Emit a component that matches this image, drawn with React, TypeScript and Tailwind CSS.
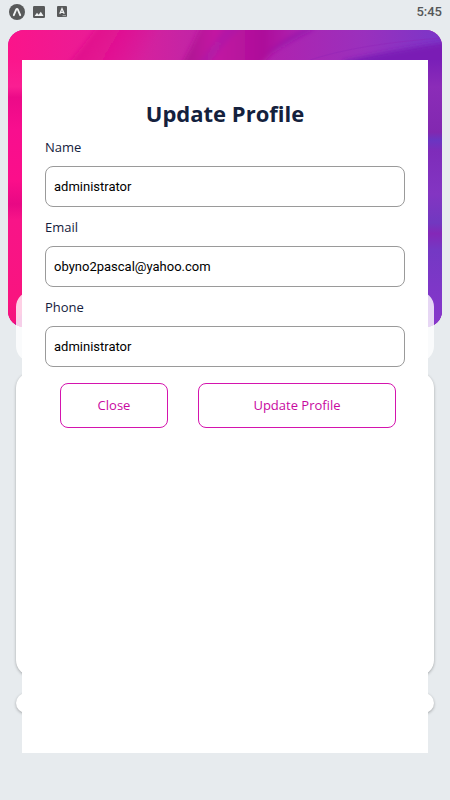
import { useState } from 'react'

interface Field {
  id: string
  label: string
  type: string
  value: string
}

const initialFields: Field[] = [
  { id: 'name', label: 'Name', type: 'text', value: 'administrator' },
  { id: 'email', label: 'Email', type: 'email', value: 'obyno2pascal@yahoo.com' },
  { id: 'phone', label: 'Phone', type: 'text', value: 'administrator' },
]

function StatusBar() {
  return (
    <header className="flex h-[30px] items-center justify-between pr-2 pl-[9px] pb-[7px] text-[#555759]">
      <div className="flex items-center">
        {/* Expo */}
        <svg className="h-4 w-4" viewBox="0 0 16 16">
          <circle cx="8" cy="8" r="8" fill="#58595a" />
          <path
            d="M4.8 11.2 7.2 5.5Q8 4.2 8.8 5.5L11.2 11.2"
            fill="none"
            stroke="#f1f3f4"
            strokeWidth="1.9"
            strokeLinecap="round"
            strokeLinejoin="round"
          />
        </svg>
        {/* Screenshot */}
        <svg className="ml-2 h-3 w-3" viewBox="0 0 12 12">
          <rect width="12" height="12" rx="1.2" fill="#58595a" />
          <path d="M1.6 10 4 6.8 5.6 8.7 7.8 5.8 10.6 10Z" fill="#f1f3f4" />
        </svg>
        {/* Keyboard */}
        <svg className="ml-3 h-[11px] w-[10px]" viewBox="0 0 10 11">
          <rect width="10" height="11" rx="1" fill="#58595a" />
          <path d="M2.8 7.8 5 2.6 7.2 7.8M3.6 6.3H6.4" fill="none" stroke="#f1f3f4" strokeWidth="1.3" />
          <path d="M5.5 9.7H9" stroke="#c4c6c8" strokeWidth="0.8" />
        </svg>
      </div>
      <time className="font-[Roboto,sans-serif] text-[13px] leading-4 font-medium">5:45</time>
    </header>
  )
}

function Banner() {
  return (
    <div className="mx-2 h-[297px] overflow-hidden rounded-2xl bg-[#c01fa8]">
      <svg className="h-full w-full" viewBox="0 0 434 297" preserveAspectRatio="none">
        <defs>
          <linearGradient id="base" x1="0" y1="0" x2="1" y2="0">
            <stop offset="0" stopColor="#fb148a" />
            <stop offset="0.2" stopColor="#e91c96" />
            <stop offset="0.4" stopColor="#c624a4" />
            <stop offset="0.6" stopColor="#b022ae" />
            <stop offset="0.82" stopColor="#9a30bd" />
            <stop offset="1" stopColor="#7a36c8" />
          </linearGradient>
          <linearGradient id="fold" gradientUnits="userSpaceOnUse" x1="70" y1="10" x2="128" y2="44">
            <stop offset="0" stopColor="#e00c8c" />
            <stop offset="1" stopColor="#e00c8c" stopOpacity="0" />
          </linearGradient>
          <linearGradient id="fold2" x1="0" y1="0" x2="1" y2="0">
            <stop offset="0" stopColor="#aa1290" />
            <stop offset="0.25" stopColor="#c314a2" />
            <stop offset="0.6" stopColor="#ad109a" />
            <stop offset="1" stopColor="#b022ae" stopOpacity="0" />
          </linearGradient>
          <linearGradient id="edge" x1="0" y1="0" x2="0" y2="1">
            <stop offset="0" stopColor="#7a1fb8" />
            <stop offset="0.1" stopColor="#8b2cb8" />
            <stop offset="0.27" stopColor="#8228b0" />
            <stop offset="0.3" stopColor="#6a35c2" />
            <stop offset="0.34" stopColor="#7e2cba" />
            <stop offset="0.5" stopColor="#8335c2" />
            <stop offset="0.61" stopColor="#7138c0" />
            <stop offset="0.65" stopColor="#8428b8" />
            <stop offset="0.71" stopColor="#7438c4" />
            <stop offset="1" stopColor="#8836cb" />
          </linearGradient>
          <linearGradient id="left" x1="0" y1="0" x2="0" y2="1">
            <stop offset="0" stopColor="#fb168c" />
            <stop offset="0.1" stopColor="#fa1e92" />
            <stop offset="0.14" stopColor="#ec0a88" />
            <stop offset="0.26" stopColor="#f80e8e" />
            <stop offset="0.45" stopColor="#fb0e8a" />
            <stop offset="0.54" stopColor="#e80884" />
            <stop offset="0.6" stopColor="#f81488" />
            <stop offset="0.9" stopColor="#f9147f" />
            <stop offset="1" stopColor="#f4107c" />
          </linearGradient>
          <filter id="soften" x="-10%" y="-30%" width="120%" height="160%">
            <feGaussianBlur stdDeviation="2.5" />
          </filter>
        </defs>
        <rect width="434" height="297" fill="url(#base)" />
        <g filter="url(#soften)">
          <path d="M92 -6H160V40H56Z" fill="url(#fold)" />
          <path d="M194 -6H310Q272 12 250 38H172Q182 20 194 -6Z" fill="url(#fold2)" />
          <path d="M218 -4H236Q216 12 202 34H190Q204 16 218 -4Z" fill="#ae1ca8" opacity="0.7" />
          <path d="M298 -2Q275 9 256 26Q278 14 308 -2Z" fill="#9216aa" opacity="0.7" />
          <path d="M335 31Q385 20 445 11V40H335Z" fill="#7a1bb5" />
        </g>
        <path d="M302 30Q350 14 434 8" fill="none" stroke="#8e22b6" strokeWidth="1" opacity="0.4" />
        <path d="M420 30H434V297H420Z" fill="url(#edge)" />
        <path d="M0 30H14V297H0Z" fill="url(#left)" />
        <path d="M14 284 4 297H14Z" fill="#d01092" />
      </svg>
    </div>
  )
}

function UpdateProfileModal() {
  const [fields, setFields] = useState<Field[]>(initialFields)

  const handleChange = (id: string, value: string) => {
    setFields(prev => prev.map(field => (field.id === id ? { ...field, value } : field)))
  }

  return (
    <div
      role="dialog"
      aria-labelledby="modal-title"
      className="absolute inset-x-[22px] top-[60px] bottom-[47px] bg-white px-[23px] pt-[37px] font-['Open_Sans',sans-serif]"
    >
      <h1 id="modal-title" className="text-center text-[22px] leading-8 font-bold text-[#14213d]">
        Update Profile
      </h1>
      <form className="mt-2" onSubmit={e => e.preventDefault()}>
        <div className="flex flex-col gap-[10px]">
          {fields.map(field => (
            <div key={field.id} className="flex flex-col gap-[9px]">
              <label htmlFor={field.id} className="text-[13px] leading-5 text-[#14213d]">
                {field.label}
              </label>
              <input
                id={field.id}
                type={field.type}
                value={field.value}
                onChange={e => handleChange(field.id, e.target.value)}
                className="h-[41px] w-full rounded-lg border border-[#9a9a9a] px-2 font-[Roboto,sans-serif] text-[13px] text-black"
              />
            </div>
          ))}
        </div>
        <div className="mt-4 flex gap-[30px]">
          <button
            type="button"
            className="ml-[15px] h-[45px] w-[30%] rounded-lg border border-[#d414ae] text-[13px] text-[#c8089f]"
          >
            Close
          </button>
          <button
            type="submit"
            className="h-[45px] w-[55%] rounded-lg border border-[#d414ae] text-[13px] text-[#c8089f]"
          >
            Update Profile
          </button>
        </div>
      </form>
    </div>
  )
}

export default function App() {
  return (
    <div className="relative min-h-screen bg-[#e7ebee]">
      <StatusBar />
      <main>
        <Banner />
        {/* Dashboard cards */}
        <div className="relative mx-4 -mt-9 h-[71px] rounded-2xl bg-white/80" />
        <div className="mx-4 mt-[10px] h-[304px] rounded-2xl bg-white shadow-[0_1px_3px_rgba(0,0,0,0.3)]" />
        <div className="mx-4 mt-[17px] h-5 rounded-full bg-white shadow-[0_1px_3px_rgba(0,0,0,0.3)]" />
      </main>
      <UpdateProfileModal />
    </div>
  )
}
